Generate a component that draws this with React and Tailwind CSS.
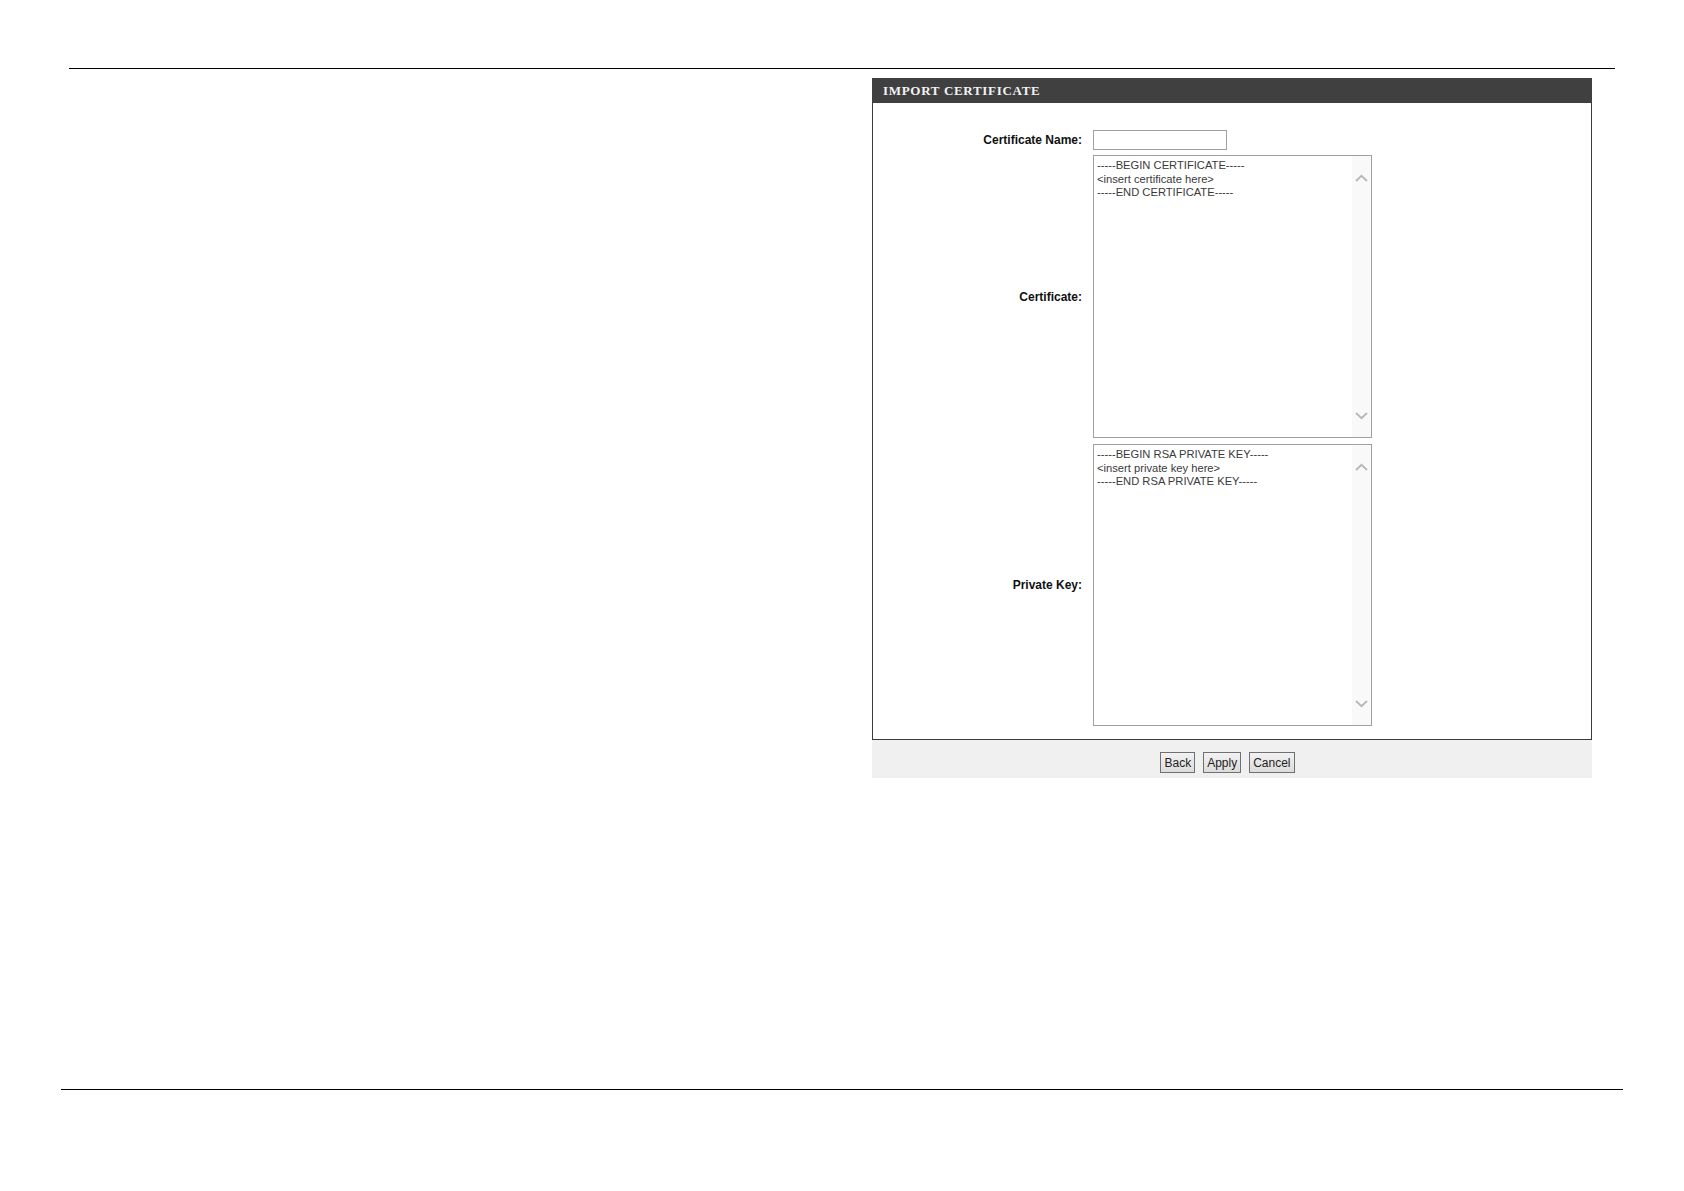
import React from "react";

const Chev = ({ up }) => (
  <svg width="13" height="8" viewBox="0 0 13 8" className="block">
    <path
      d={up ? "M1 7 L6.5 1.8 L12 7" : "M1 1 L6.5 6.2 L12 1"}
      fill="none"
      stroke="#b8b8b8"
      strokeWidth="1.9"
    />
  </svg>
);

const FakeTextarea = ({ lines, h }) => (
  <div className={`flex border border-[#a0a0a0] bg-white w-[279px] ${h}`}>
    <div className="flex-1 pl-[3px] pt-[3px] text-[11.2px] leading-[13.5px] text-[#3a3a3a] font-['Liberation_Sans',sans-serif] whitespace-pre">
      {lines.map((l, i) => (
        <div key={i}>{l}</div>
      ))}
    </div>
    <div className="w-[19px] bg-[#f9f9f9] flex flex-col items-center justify-between pt-[18px] pb-[17px]">
      <Chev up />
      <Chev />
    </div>
  </div>
);

const Label = ({ children }) => (
  <div className="w-[220px] pr-[11px] text-right text-[12px] font-bold text-[#111] font-['Liberation_Sans',sans-serif]">
    {children}
  </div>
);

const Btn = ({ children }) => (
  <button className="h-[21px] px-[3px] border border-[#707070] bg-gradient-to-b from-[#f2f2f2] to-[#dcdcdc] text-[12px] text-[#222] font-['Liberation_Sans',sans-serif] leading-none">
    {children}
  </button>
);

export default function App() {
  return (
    <div className="w-[1684px] h-[1191px] bg-white flex flex-col font-['Liberation_Sans',sans-serif]">
      <div className="mt-[68px] ml-[69px] w-[1546px] h-px bg-black" />
      <div className="mt-[9px] ml-[872px] w-[720px]">
        <div className="h-[25px] bg-[#404040] flex items-center pl-[11px] text-[13px] font-bold text-[#f2f2f2] tracking-[0.7px] font-['Liberation_Serif',serif]">
          IMPORT CERTIFICATE
        </div>
        <div className="border-x border-b border-[#3a3a3a] pt-[27px] pb-[13px] flex flex-col gap-[5px]">
          <div className="flex items-center">
            <Label>Certificate Name:</Label>
            <div className="w-[134px] h-[20px] border border-[#a0a0a0] bg-white" />
          </div>
          <div className="flex items-center">
            <Label>Certificate:</Label>
            <FakeTextarea
              h="h-[283px]"
              lines={[
                "-----BEGIN CERTIFICATE-----",
                "<insert certificate here>",
                "-----END CERTIFICATE-----",
              ]}
            />
          </div>
          <div className="flex items-center mt-[1px]">
            <Label>Private Key:</Label>
            <FakeTextarea
              h="h-[282px]"
              lines={[
                "-----BEGIN RSA PRIVATE KEY-----",
                "<insert private key here>",
                "-----END RSA PRIVATE KEY-----",
              ]}
            />
          </div>
        </div>
        <div className="h-[38px] bg-[#f0f0f0] flex items-start pt-[12px] pr-[9px] justify-center gap-[8px]">
          <Btn>Back</Btn>
          <Btn>Apply</Btn>
          <Btn>Cancel</Btn>
        </div>
      </div>
      <div className="mt-auto mb-[101px] ml-[61px] w-[1562px] h-px bg-black" />
    </div>
  );
}
